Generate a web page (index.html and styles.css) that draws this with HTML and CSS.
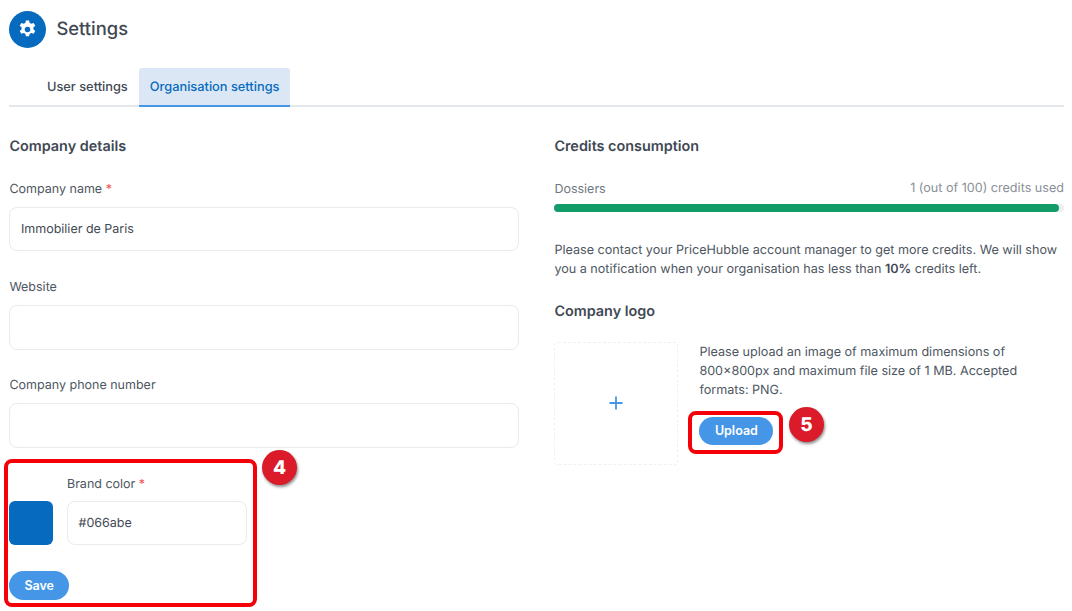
FILE: index.html
```html
<!DOCTYPE html>
<html lang="en">
<head>
<meta charset="utf-8">
<title>Settings</title>
<link rel="stylesheet" href="styles.css">
</head>
<body>
<main class="page">
  <header class="header">
    <span class="header-icon">
      <svg viewBox="0 0 24 24" width="23" height="23" aria-hidden="true"><path fill="#fff" fill-rule="evenodd" d="M10.3 2h3.4l.5 2.6c.6.2 1.2.5 1.7.9l2.5-.9 1.7 3-2 1.7c.1.7.1 1.3 0 2l2 1.7-1.7 3-2.5-.9c-.5.4-1.1.7-1.7.9l-.5 2.6h-3.4l-.5-2.6c-.6-.2-1.2-.5-1.7-.9l-2.5.9-1.7-3 2-1.7c-.1-.7-.1-1.3 0-2l-2-1.7 1.7-3 2.5.9c.5-.4 1.1-.7 1.7-.9zM12 8.6a2.9 2.9 0 1 0 0 5.8 2.9 2.9 0 0 0 0-5.8z" transform="translate(0 .5)"/></svg>
    </span>
    <h1 class="title">Settings</h1>
  </header>

  <nav class="tabs">
    <a class="tab">User settings</a>
    <a class="tab tab-active">Organisation settings</a>
  </nav>

  <div class="columns">
    <section class="column">
      <h2 class="heading">Company details</h2>
      <div class="field field-first">
        <label class="label">Company name <span class="req">*</span></label>
        <div class="input">Immobilier de Paris</div>
      </div>
      <div class="field">
        <label class="label">Website</label>
        <div class="input"></div>
      </div>
      <div class="field">
        <label class="label">Company phone number</label>
        <div class="input"></div>
      </div>
      <div class="brand">
        <div class="swatch"></div>
        <div class="brand-field">
          <label class="label label-brand">Brand color <span class="req">*</span></label>
          <div class="input">#066abe</div>
        </div>
      </div>
      <button class="button button-save">Save</button>
    </section>

    <section class="column">
      <h2 class="heading">Credits consumption</h2>
      <div class="credit-row">
        <span class="credit-name">Dossiers</span>
        <span class="credit-used">1 (out of 100) credits used</span>
      </div>
      <div class="progress"><div class="progress-fill"></div></div>
      <p class="text credit-note">Please contact your PriceHubble account manager to get more credits. We will show you a notification when your organisation has less than <strong>10%</strong> credits left.</p>
      <h2 class="heading logo-heading">Company logo</h2>
      <div class="logo-row">
        <div class="dropzone">
          <svg viewBox="0 0 14 14" width="14" height="14" aria-hidden="true"><path d="M7 .5v13M.5 7h13" stroke="#4596e6" stroke-width="1.8" fill="none"/></svg>
        </div>
        <div class="logo-info">
          <p class="text">Please upload an image of maximum dimensions of 800×800px and maximum file size of 1 MB. Accepted formats: PNG.</p>
          <button class="button button-upload">Upload</button>
        </div>
      </div>
    </section>
  </div>
</main>

<div class="callout callout-brand"></div>
<div class="callout callout-upload"></div>
<span class="badge badge-brand">4</span>
<span class="badge badge-upload">5</span>
</body>
</html>
```
FILE: styles.css
```css
* { box-sizing: border-box; }
html, body { margin: 0; height: 100%; }
body {
  position: relative;
  width: 1072px;
  height: 611px;
  overflow: hidden;
  background: #fff;
  font-family: Inter, "Liberation Sans", sans-serif;
  font-size: 12.5px;
  color: #3f4954;
  text-rendering: geometricPrecision;
}
.page { padding: 11px 8px 0 9.4px; }
.header { display: flex; align-items: center; gap: 10px; height: 36px; }
.header-icon {
  width: 37px; height: 37px; border-radius: 50%;
  background: #066abe;
  display: flex; align-items: center; justify-content: center;
}
.title { margin: 0; font-size: 18.4px; line-height: 36px; font-weight: 500; color: #3f4954; }
.tabs {
  display: flex;
  margin-top: 21px;
  padding-left: 26.6px;
  height: 38.5px;
  border-bottom: 2px solid #e3e6ea;
}
.tab {
  display: flex; align-items: center;
  height: 38.5px;
  padding: 0 11px;
  font-size: 12.8px; font-weight: 500; color: #3f4954;
  border-radius: 3px 3px 0 0;
}
.tab-active {
  background: #dbe7f5;
  color: #066abe;
  border-bottom: 2px solid #4596e6;
  padding-top: 2px;
}
.columns { display: grid; grid-template-columns: 509.6px 509.6px; column-gap: 35.4px; margin-top: 31.5px; }
.column { min-width: 0; }
.heading { margin: 0; font-size: 14.4px; line-height: 18px; font-weight: 600; color: #3f4954; }
.field { margin-top: 27.8px; }
.field-first { margin-top: 25px; }
.label { display: block; font-size: 12.5px; line-height: 18px; color: #4d5661; margin-bottom: 8px; }
.label-brand { margin-bottom: 7px; }
.req { color: #ef5350; }
.input {
  height: 44.4px;
  border: 1px solid #e9ebee;
  border-radius: 8px;
  padding: 0 10.5px;
  line-height: 44px;
  font-size: 12.5px;
  color: #3f4954;
}
.brand { display: flex; align-items: flex-end; gap: 14px; margin-top: 28px; }
.swatch { width: 43.6px; height: 44.4px; background: #066abe; border-radius: 6px; }
.brand-field { width: 180px; }
.button {
  display: block;
  border: 0; padding: 0;
  height: 29px;
  border-radius: 15px;
  background: #4596e6;
  color: #fff;
  font: 600 12.5px Inter, "Liberation Sans", sans-serif;
}
.button-save { width: 59.6px; margin-top: 25.5px; }
.credit-row { display: flex; justify-content: space-between; align-items: center; margin-top: 24px; height: 18px; }
.credit-name { color: #6f7780; }
.credit-used { color: #8a9098; font-size: 12.6px; margin-top: -2px; }
.progress { margin-top: 6px; height: 8px; border-radius: 4px; background: #eceef0; }
.progress-fill { width: 99%; height: 100%; border-radius: 4px; background: #129d68; }
.text { margin: 0; font-size: 12.6px; line-height: 19px; color: #4d5661; }
.text strong { font-weight: 600; color: #3f4954; }
.credit-note { margin-top: 28.6px; }
.logo-heading { margin-top: 24.4px; }
.logo-row { display: flex; gap: 21px; margin-top: 21px; }
.dropzone {
  width: 124px; height: 123px; flex: none;
  border: 1px dashed #eef0f2;
  border-radius: 4px;
  display: flex; align-items: center; justify-content: center;
}
.logo-info { margin-top: 1px; }
.button-upload { width: 74px; height: 28px; margin-top: 17px; }
.callout {
  position: absolute;
  border: 4px solid #f40009;
  border-radius: 8px;
}
.callout-brand { left: 4px; top: 459px; width: 253px; height: 148px; }
.callout-upload { left: 688px; top: 411px; width: 95px; height: 43px; }
.badge {
  position: absolute;
  width: 35px; height: 35px;
  border-radius: 50%;
  background: #db1a2a;
  color: #fff;
  font: 800 19px/35px Inter, "Liberation Sans", sans-serif;
  text-align: center;
  box-shadow: 1px 2px 3px rgba(0,0,0,.45);
}
.badge-brand { left: 262px; top: 450px; }
.badge-upload { left: 789px; top: 407px; }
```
